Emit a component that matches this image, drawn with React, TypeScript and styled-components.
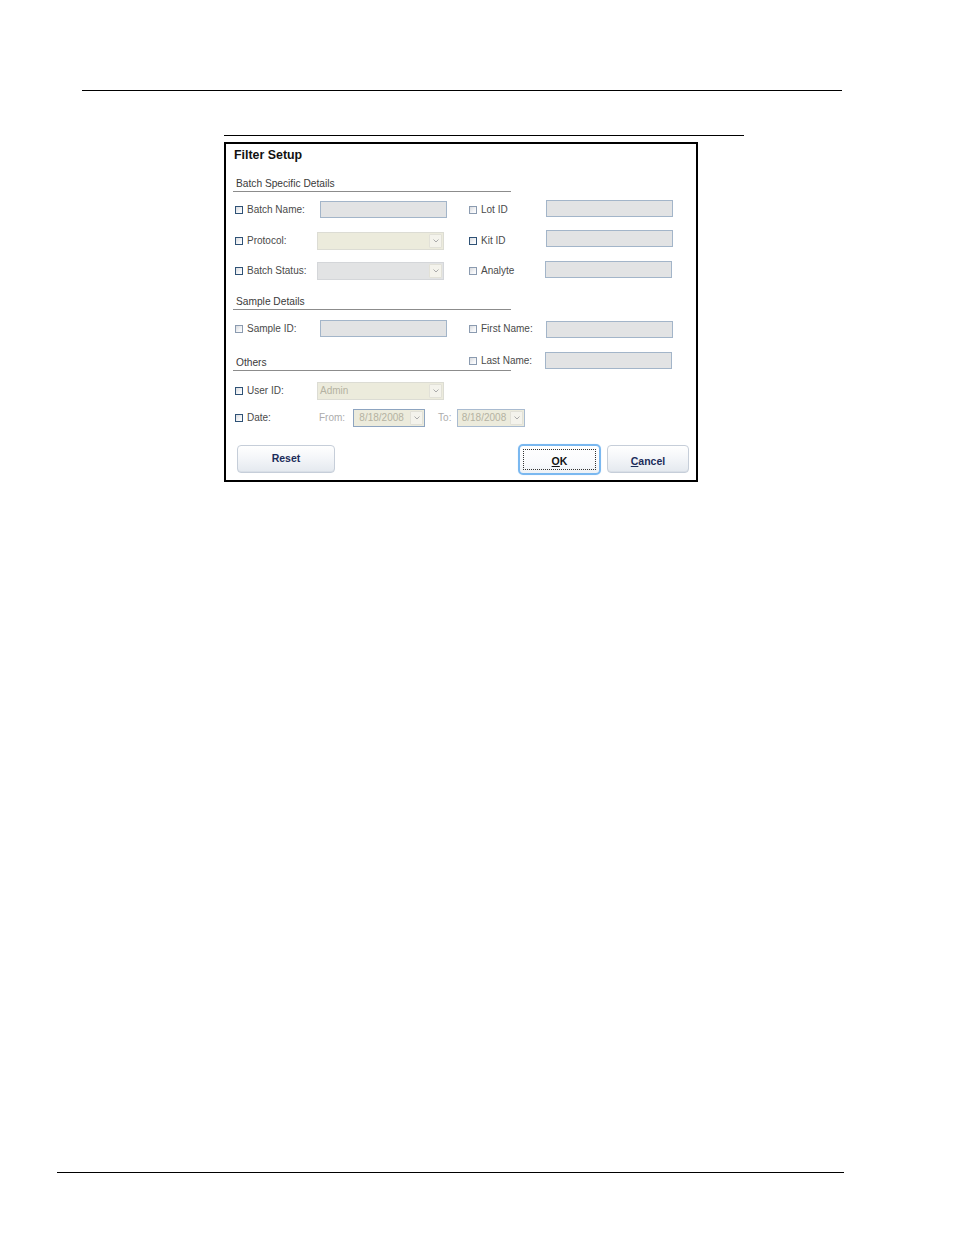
import React from "react";
import styled, { createGlobalStyle } from "styled-components";

const GlobalStyle = createGlobalStyle`
  html, body { margin: 0; padding: 0; background: #ffffff; }
  body { font-family: "Liberation Sans", Arial, sans-serif; }
`;

const Page = styled.div`
  width: 954px;
  min-height: 1235px;
  box-sizing: border-box;
  padding-top: 90px;
  display: flex;
  flex-direction: column;
`;

const Rule = styled.div<{ $left: number; $width: number; $thick?: number }>`
  margin-left: ${(p) => p.$left}px;
  width: ${(p) => p.$width}px;
  height: ${(p) => p.$thick ?? 1}px;
  background: #000;
  flex-shrink: 0;
`;

const FooterRule = styled(Rule)`
  margin-top: auto;
  margin-bottom: 62px;
`;

const Figure = styled.div`
  margin-left: 224px;
  margin-top: 44px;
  display: flex;
  flex-direction: column;
`;

const Dialog = styled.div`
  margin-top: 6px;
  width: 474px;
  height: 340px;
  box-sizing: border-box;
  border: 2px solid #000;
  padding: 4px 7px 0 9px;
  display: flex;
  flex-direction: column;
  background: #fff;
`;

const Title = styled.div`
  margin-left: -1px;
  font-size: 12.4px;
  line-height: 14px;
  font-weight: bold;
  color: #111;
`;

const SectionHeader = styled.div<{ $top?: number; $pad?: number }>`
  margin-top: ${(p) => p.$top ?? 0}px;
  margin-left: -2px;
  width: 278px;
  font-size: 10.2px;
  line-height: 14px;
  padding-left: 3px;
  padding-top: 1px;
  box-sizing: border-box;
  padding-bottom: ${(p) => p.$pad ?? 0}px;
  border-bottom: 1px solid #8c8c8c;
  color: #3a3a3a;
`;

const GridHeader = styled(SectionHeader)`
  grid-column: 1 / 4;
  grid-row: 1;
  justify-self: start;
  align-self: end;
`;

const Row = styled.div<{ $top: number }>`
  margin-top: ${(p) => p.$top}px;
  display: grid;
  grid-template-columns: 82px 152px 76px 128px;
  grid-template-rows: 19px;
  height: 19px;
  align-items: center;
`;

const CheckLabel = styled.div<{ $align?: string; $col?: number }>`
  display: flex;
  align-items: center;
  gap: 4px;
  height: 17px;
  align-self: ${(p) => p.$align ?? "center"};
  ${(p) => (p.$col ? `grid-column: ${p.$col}; grid-row: 1;` : "")}
  font-size: 10px;
  color: #4a4a4a;
  white-space: nowrap;
`;

const Box = styled.span<{ $dark?: boolean }>`
  display: inline-block;
  width: 8px;
  height: 8px;
  box-sizing: border-box;
  border: 1px solid ${(p) => (p.$dark ? "#2f5276" : "#8b9bb0")};
  background: linear-gradient(135deg, #d8dade 0%, #f4f5f7 60%, #ffffff 100%);
  flex-shrink: 0;
`;

const TextField = styled.div<{ $ml?: number; $lift?: number; $align?: string; $col?: number }>`
  width: 127px;
  height: 17px;
  box-sizing: border-box;
  margin-left: ${(p) => p.$ml ?? 0}px;
  margin-bottom: ${(p) => Math.max(0, (p.$lift ?? 0) * 2)}px;
  margin-top: ${(p) => Math.max(0, -(p.$lift ?? 0) * 2)}px;
  align-self: ${(p) => p.$align ?? "center"};
  ${(p) => (p.$col ? `grid-column: ${p.$col}; grid-row: 1;` : "")}
  background: #e2e3e4;
  border: 1px solid #a3b5c9;
`;

const SelectBox = styled.div<{ $w: number; $bg: string; $border: string }>`
  width: ${(p) => p.$w}px;
  height: 18px;
  box-sizing: border-box;
  display: flex;
  align-items: stretch;
  background: ${(p) => p.$bg};
  border: 1px solid ${(p) => p.$border};
  flex-shrink: 0;
`;

const SelectValue = styled.span<{ $center?: boolean }>`
  flex: 1;
  display: flex;
  align-items: center;
  justify-content: ${(p) => (p.$center ? "center" : "flex-start")};
  padding-left: ${(p) => (p.$center ? 0 : 2)}px;
  font-size: 10px;
  color: #b4b2a2;
  white-space: nowrap;
  overflow: hidden;
`;

const ArrowBox = styled.span`
  width: 11px;
  margin: 1px;
  display: flex;
  align-items: center;
  justify-content: center;
  background: #f4f3ec;
  border: 1px solid #e2e1d8;
  border-radius: 1px;
`;

const DateGroup = styled.div`
  grid-column: 2 / 5;
  display: flex;
  align-items: center;
  padding-left: 2px;
`;

const DimLabel = styled.span<{ $ml?: number; $mr?: number }>`
  font-size: 10px;
  color: #acacac;
  margin-left: ${(p) => p.$ml ?? 0}px;
  margin-right: ${(p) => p.$mr ?? 0}px;
`;

const ButtonRow = styled.div`
  margin-top: 18px;
  display: flex;
  align-items: flex-start;
`;

const Spacer = styled.div`
  flex: 1;
`;

const Button = styled.button<{ $w: number; $drop?: number; $ml?: number }>`
  width: ${(p) => p.$w}px;
  height: 28px;
  margin-left: ${(p) => p.$ml ?? 0}px;
  box-sizing: border-box;
  padding: ${(p) => ((p.$drop ?? 0) > 0 ? `${p.$drop}px 0 0` : `0 0 ${-(p.$drop ?? 0)}px`)};
  border: 1px solid #c6ced9;
  border-radius: 4px;
  background: linear-gradient(#ffffff 0%, #f4f6f9 45%, #e4e9ef 100%);
  box-shadow: inset 0 -1px 0 #d9dfe7;
  font-family: "Liberation Sans", Arial, sans-serif;
  font-size: 10.5px;
  font-weight: bold;
  color: #1b2c5a;
  display: flex;
  align-items: center;
  justify-content: center;
  cursor: default;
  u { text-decoration: underline; text-underline-offset: 1px; }
`;

const FocusButton = styled(Button)`
  height: 31px;
  margin-top: -1px;
  padding: 3px;
  border: 2px solid #7ab8f0;
  border-radius: 5px;
  background: linear-gradient(#ffffff 0%, #fafbfd 60%, #eef2f6 100%);
  box-shadow: 0 0 1px #b6d8f7;
`;

const FocusRing = styled.span`
  flex: 1;
  align-self: stretch;
  display: flex;
  align-items: center;
  justify-content: center;
  padding-top: 3px;
  border: 1px dotted #333;
  color: #111;
`;

const Chevron = () => (
  <svg width="6" height="4" viewBox="0 0 6 4">
    <path d="M0.5 0.5 L3 3 L5.5 0.5" fill="none" stroke="#aaa" strokeWidth="1" />
  </svg>
);

const Check = ({
  label,
  dark,
  align,
  col,
}: {
  label: string;
  dark?: boolean;
  align?: string;
  col?: number;
}) => (
  <CheckLabel $align={align} $col={col}>
    <Box $dark={dark} />
    {label}
  </CheckLabel>
);

const Select = ({
  w,
  bg,
  border,
  value,
  center,
}: {
  w: number;
  bg: string;
  border: string;
  value?: string;
  center?: boolean;
}) => (
  <SelectBox $w={w} $bg={bg} $border={border}>
    <SelectValue $center={center}>{value}</SelectValue>
    <ArrowBox>
      <Chevron />
    </ArrowBox>
  </SelectBox>
);

const BEIGE = "#ecebdc";
const GREY = "#e2e3e4";

export default function App() {
  return (
    <>
      <GlobalStyle />
      <Page>
        <Rule $left={82} $width={760} />
        <Figure>
          <Rule $left={0} $width={520} />
          <Dialog>
            <Title>Filter Setup</Title>
            <SectionHeader $top={14}>Batch Specific Details</SectionHeader>

            <Row $top={8}>
              <Check label="Batch Name:" dark />
              <TextField $ml={3} />
              <Check label="Lot ID" />
              <TextField $ml={1} $lift={1} />
            </Row>

            <Row $top={12}>
              <Check label="Protocol:" dark />
              <Select w={127} bg={BEIGE} border="#dcdcd4" />
              <Check label="Kit ID" dark />
              <TextField $ml={1} $lift={2} />
            </Row>

            <Row $top={11}>
              <Check label="Batch Status:" dark />
              <Select w={127} bg={GREY} border="#d4d6d9" />
              <Check label="Analyte" />
              <TextField $ml={0} $lift={1} />
            </Row>

            <SectionHeader $top={14}>Sample Details</SectionHeader>

            <Row $top={9}>
              <Check label="Sample ID:" />
              <TextField $ml={3} />
              <Check label="First Name:" />
              <TextField $ml={1} $lift={-1} />
            </Row>

            <Row $top={14}>
              <GridHeader>Others</GridHeader>
              <Check label="Last Name:" align="start" col={3} />
              <TextField $ml={0} $align="start" $col={4} />
            </Row>

            <Row $top={10}>
              <Check label="User ID:" dark />
              <Select w={127} bg={BEIGE} border="#dcdcd4" value="Admin" />
            </Row>

            <Row $top={8}>
              <Check label="Date:" dark />
              <DateGroup>
                <DimLabel $mr={8}>From:</DimLabel>
                <Select w={72} bg={BEIGE} border="#8da4c0" value="8/18/2008" center />
                <DimLabel $ml={13} $mr={6}>
                  To:
                </DimLabel>
                <Select w={68} bg={BEIGE} border="#a9bbd0" value="8/18/2008" center />
              </DateGroup>
            </Row>

            <ButtonRow>
              <Button $w={98} $ml={2} $drop={-2}>
                Reset
              </Button>
              <Spacer />
              <FocusButton $w={83}>
                <FocusRing>
                  <span>
                    <u>O</u>K
                  </span>
                </FocusRing>
              </FocusButton>
              <Button $w={82} $ml={6} $drop={4}>
                <span>
                  <u>C</u>ancel
                </span>
              </Button>
            </ButtonRow>
          </Dialog>
        </Figure>
        <FooterRule $left={57} $width={787} />
      </Page>
    </>
  );
}
